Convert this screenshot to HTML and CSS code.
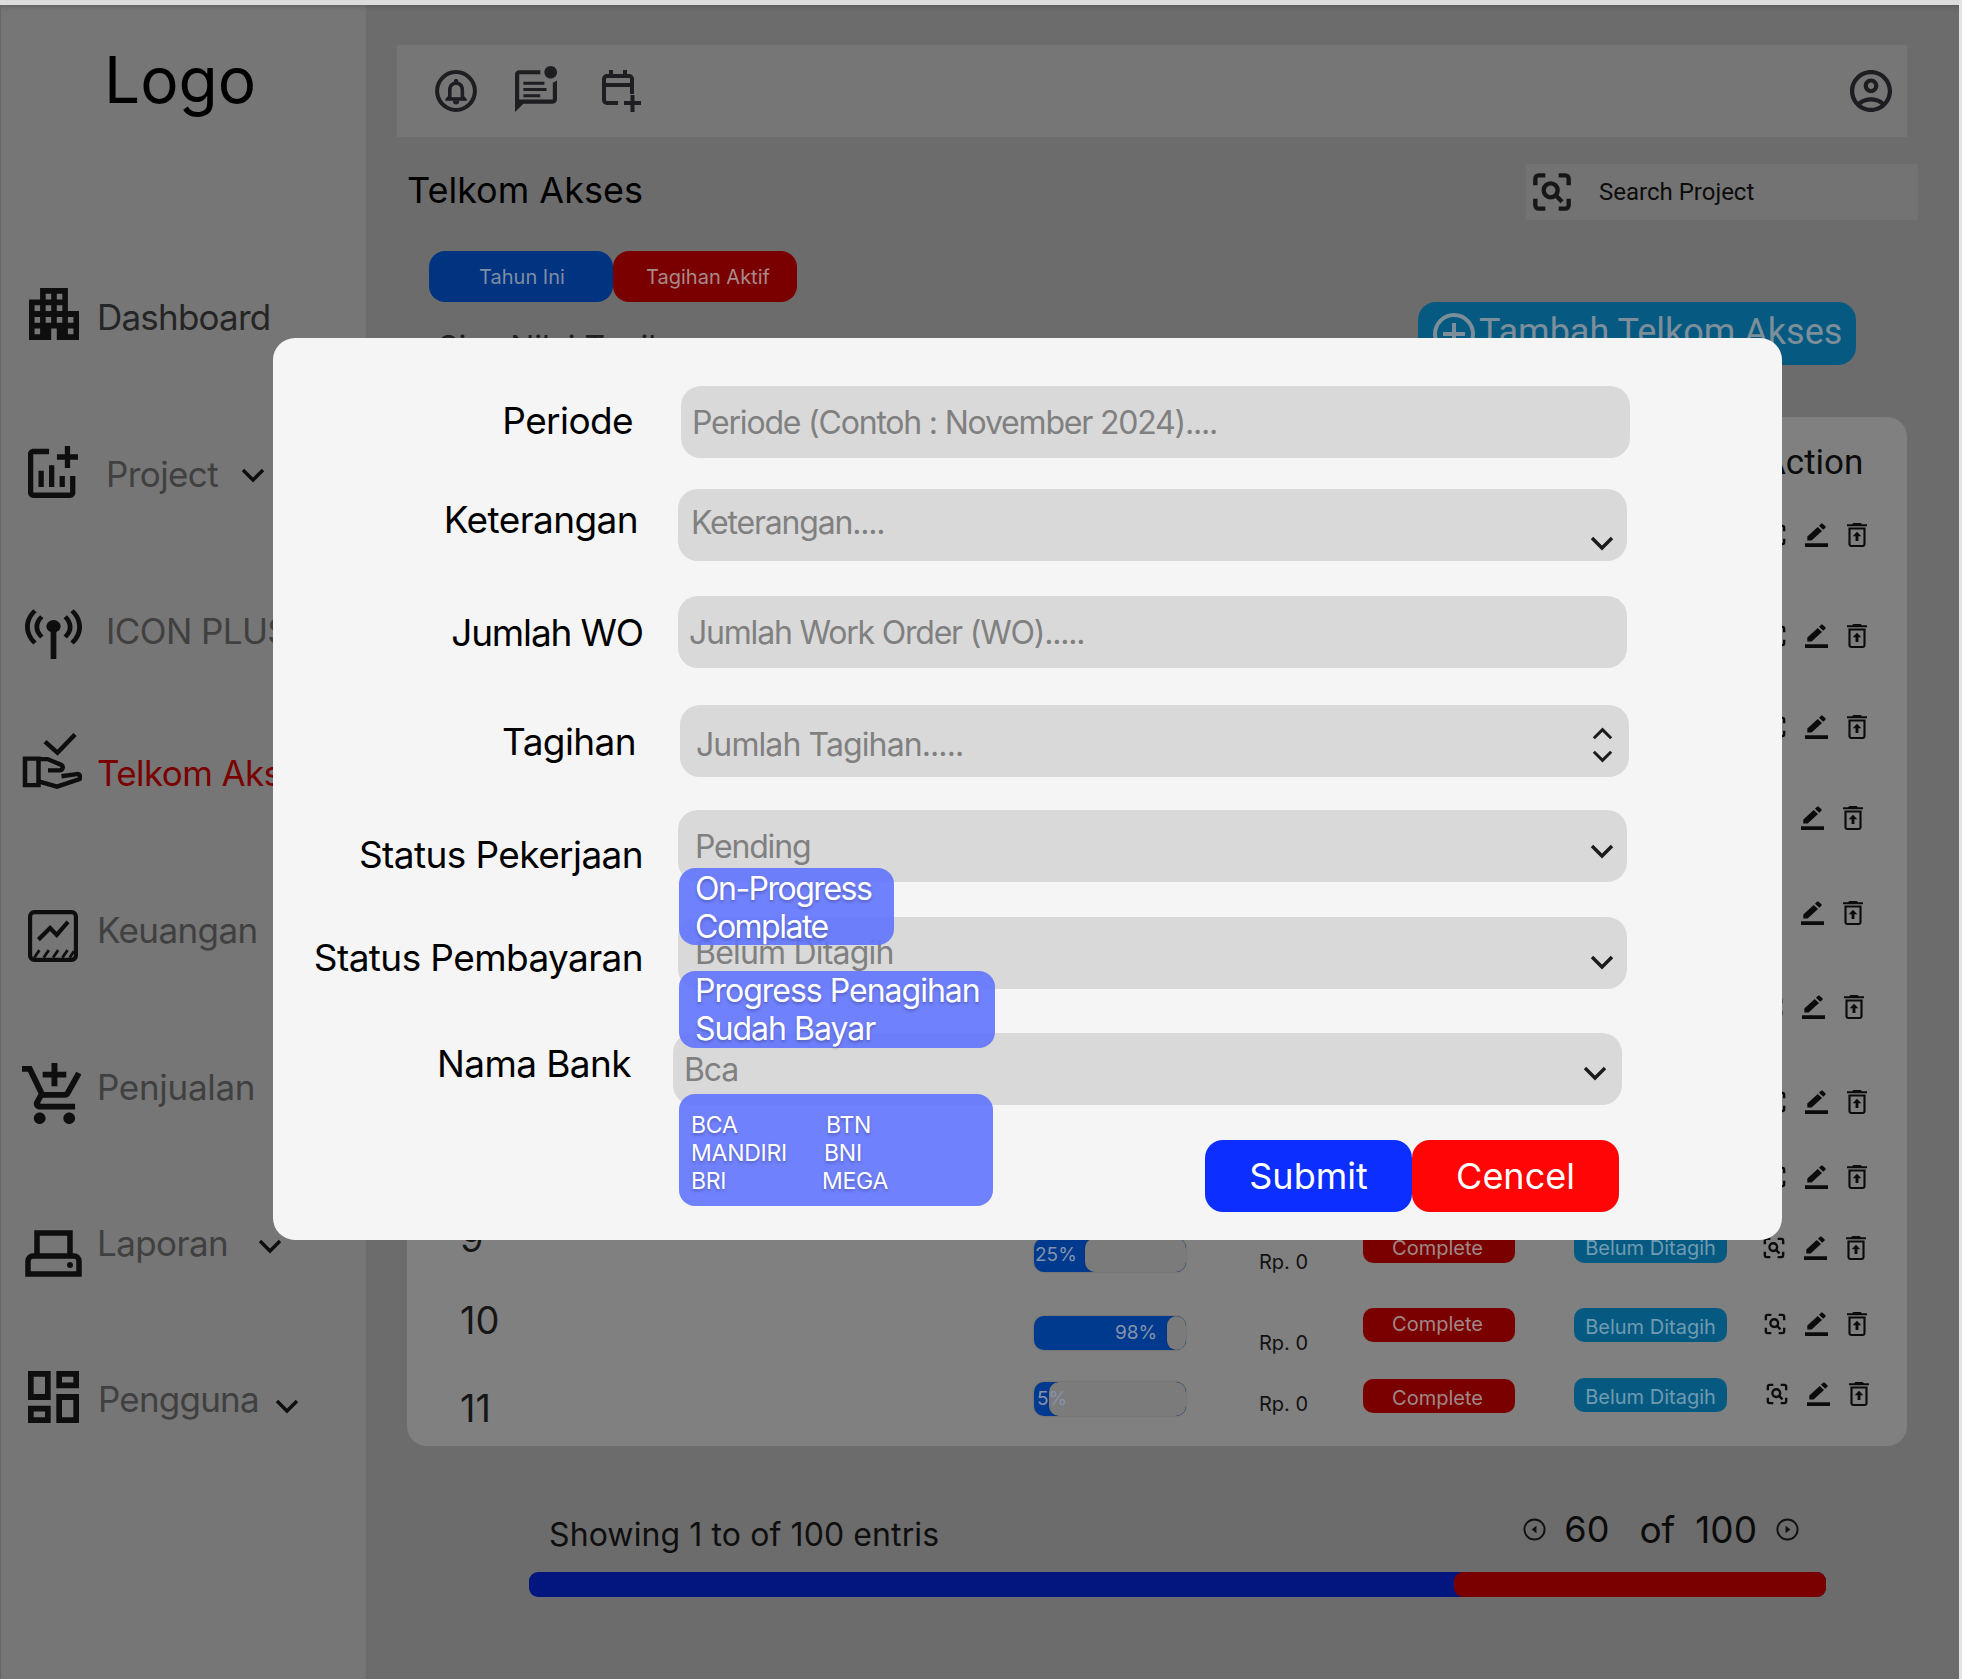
FILE: index.html
```html
<!DOCTYPE html>
<html lang="en">
<head>
    <meta charset="UTF-8">
    <meta name="viewport" content="width=device-width, initial-scale=1.0">
    <title>Telkom Akses</title>
    <link rel="stylesheet" href="styles.css">
</head>
<body>

    <svg class="sprite" width="0" height="0">
        <symbol id="i-chevron" viewBox="0 0 24 15"><path d="M2 2l10 10L22 2" fill="none" stroke="currentColor" stroke-width="3.4"/></symbol>
        <symbol id="i-scan" viewBox="0 0 24 24">
            <g fill="none" stroke="currentColor" stroke-width="2.6">
                <path d="M2 8V4a2 2 0 0 1 2-2h4M16 2h4a2 2 0 0 1 2 2v4M22 16v4a2 2 0 0 1-2 2h-4M8 22H4a2 2 0 0 1-2-2v-4"/>
                <circle cx="11.2" cy="11" r="4.2"/>
                <path d="M14.2 14l3.8 3.8"/>
            </g>
        </symbol>
        <symbol id="i-edit" viewBox="2 1.5 20 22.5" preserveAspectRatio="none"><path d="M22 24H2v-3.400h20V24zM13.060 5.190l3.750 3.750L7.750 18H4v-3.750l9.060-9.060zm4.820 2.680-3.750-3.750 1.830-1.830c.39-.39 1.020-.39 1.410 0l2.340 2.340c.39.39.39 1.020 0 1.410l-1.830 1.830z"/></symbol>
        <symbol id="i-trash" viewBox="5 3 14 18" preserveAspectRatio="none"><path fill-rule="evenodd" d="M15.500 4l-1-1h-5l-1 1H5v1.400h14V4zM6 6.400V19c0 1.100.9 2 2 2h8c1.100 0 2-.9 2-2V6.400H6zm1.500 1.500h9V19c0 .3-.2.500-.5.500H8c-.3 0-.5-.2-.5-.5V7.900zM12 9.500l-3 3.500h2v3.500h2V13h2z"/></symbol>
    </svg>

    <div class="top-strip"></div>

    <div class="page">

        <aside class="sidebar">
            <div class="logo">Logo</div>
            <nav class="nav">
                <a class="nav-item nav-dashboard">
                    <svg class="nav-icon" viewBox="3 3 18 18" preserveAspectRatio="none"><path d="M17 11V3H7v4H3v14h8v-4h2v4h8V11h-4zM7 19H5v-2h2v2zm0-4H5v-2h2v2zm0-4H5V9h2v2zm4 4H9v-2h2v2zm0-4H9V9h2v2zm0-4H9V5h2v2zm4 8h-2v-2h2v2zm0-4h-2V9h2v2zm0-4h-2V5h2v2zm4 12h-2v-2h2v2zm0-4h-2v-2h2v2z"/></svg>
                    <span class="nav-label">Dashboard</span>
                </a>
                <a class="nav-item nav-project">
                    <svg class="nav-icon" viewBox="3 2 19 19" preserveAspectRatio="none"><path d="M22 5v2h-3v3h-2V7h-3V5h3V2h2v3h3zm-3 14H5V5h6V3H5c-1.100 0-2 .9-2 2v14c0 1.100.9 2 2 2h14c1.100 0 2-.9 2-2v-6h-2v6zm-4-6v4h2v-4h-2zm-4 4h2V9h-2v8zm-2 0v-6H7v6h2z"/></svg>
                    <span class="nav-label">Project</span>
                    <svg class="chevron"><use href="#i-chevron"/></svg>
                </a>
                <a class="nav-item nav-icon-plus">
                    <svg class="nav-icon" viewBox="2 2 20 21" preserveAspectRatio="none"><path d="M7.300 14.700l1.200-1.200c-1-1-1.500-2.300-1.500-3.500 0-1.300.5-2.600 1.500-3.500L7.300 5.300c-1.300 1.300-2 3-2 4.700s.7 3.400 2 4.700zM19.100 2.900l-1.200 1.200c1.600 1.600 2.400 3.800 2.400 5.900 0 2.100-.8 4.300-2.400 5.900l1.200 1.200c2-2 2.900-4.500 2.900-7.100 0-2.600-1-5.100-2.900-7.100zM6.100 4.100 4.900 2.900C3 4.900 2 7.400 2 10s1 5.100 2.900 7.100l1.200-1.200C4.500 14.300 3.700 12.100 3.700 10c0-2.100.8-4.300 2.400-5.900zM16.700 14.700c1.300-1.300 2-3 2-4.700-.1-1.700-.7-3.400-2-4.700l-1.200 1.200c1 1 1.500 2.300 1.500 3.500 0 1.300-.5 2.600-1.500 3.500l1.200 1.200z"/><circle cx="12" cy="9.800" r="2.500"/><rect x="11" y="11" width="2" height="12"/></svg>
                    <span class="nav-label">ICON PLUS</span>
                </a>
                <a class="nav-item nav-telkom active">
                    <svg class="nav-icon" viewBox="0 0 24 24" preserveAspectRatio="none">
                        <g fill="none" stroke="currentColor" stroke-width="1.800">
                            <path d="M9.200 4l5 4.600L21.200 1"/>
                            <path d="M1.200 11h5.400v11H1.200z"/>
                            <path d="M6.600 11.200h3.600l5.400 2.300c1.200.6.7 2.400-.6 2.400h-4.600M6.600 20.400l7.400 2.200 8.800-3c1-.6.4-2.400-1-2.200l-6 .9"/>
                        </g>
                    </svg>
                    <span class="nav-label">Telkom Akses</span>
                </a>
                <a class="nav-item nav-keuangan">
                    <svg class="nav-icon" viewBox="0 0 24 24" preserveAspectRatio="none">
                        <g fill="none" stroke="currentColor">
                            <rect x="1" y="1" width="22" height="22" rx="2" stroke-width="2"/>
                            <path d="M5 13.700l5.600-5.400 3.200 3.200 5.400-6" stroke-width="2"/>
                            <path d="M3 22l2.500-3.500M7.500 22l2.500-3.500M12 22l2.500-3.500M16.500 22l2.500-3.500M20 22l2-3" stroke-width="1.300"/>
                        </g>
                    </svg>
                    <span class="nav-label">Keuangan</span>
                </a>
                <a class="nav-item nav-penjualan">
                    <svg class="nav-icon" viewBox="1 1 20 21" preserveAspectRatio="none"><path d="M11 9h2V6h3V4h-3V1h-2v3H8v2h3v3zm-4 9c-1.100 0-1.990.9-1.990 2S5.900 22 7 22s2-.9 2-2-.9-2-2-2zm10 0c-1.100 0-1.990.9-1.990 2s.89 2 1.990 2 2-.9 2-2-.9-2-2-2zm-9.830-3.250l.03-.12.9-1.630h7.450c.75 0 1.410-.41 1.750-1.030l3.860-7.010L19.420 4h-.01l-1.100 2-2.760 5H8.530l-.13-.27L6.160 6l-.95-2-.94-2H1v2h2l3.600 7.590-1.350 2.450c-.16.28-.25.61-.25.96 0 1.100.9 2 2 2h12v-2H7.420c-.13 0-.25-.11-.25-.25z"/></svg>
                    <span class="nav-label">Penjualan</span>
                </a>
                <a class="nav-item nav-laporan">
                    <svg class="nav-icon" viewBox="0 0 57 47" preserveAspectRatio="none">
                        <g fill="none" stroke="currentColor" stroke-width="5.500">
                            <path d="M12 26V3h33v23"/>
                            <path d="M3 44V31a5 5 0 0 1 5-5h41a5 5 0 0 1 5 5v13z"/>
                        </g>
                        <circle cx="45" cy="35" r="3"/>
                    </svg>
                    <span class="nav-label">Laporan</span>
                    <svg class="chevron"><use href="#i-chevron"/></svg>
                </a>
                <a class="nav-item nav-pengguna">
                    <svg class="nav-icon" viewBox="3 3 18 18" preserveAspectRatio="none"><path d="M19 5v2h-4V5h4M9 5v6H5V5h4m10 8v6h-4v-6h4M9 17v2H5v-2h4M21 3h-8v6h8V3zM11 3H3v10h8V3zm10 8h-8v10h8V11zm-10 4H3v6h8v-6z"/></svg>
                    <span class="nav-label">Pengguna</span>
                    <svg class="chevron"><use href="#i-chevron"/></svg>
                </a>
            </nav>
        </aside>

        <main class="content">
            <header class="topbar">
                <svg class="top-icon icon-bell" viewBox="0 0 24 24">
                    <circle cx="12" cy="12" r="10.800" fill="none" stroke="currentColor" stroke-width="2.300"/>
                    <path transform="translate(3.400 3.600) scale(.72)" stroke="currentColor" stroke-width=".8" d="M12 22c1.100 0 2-.9 2-2h-4c0 1.100.9 2 2 2zm6-6v-5c0-3.070-1.630-5.640-4.500-6.320V4c0-.83-.67-1.500-1.500-1.500s-1.500.67-1.500 1.500v.68C7.640 5.360 6 7.920 6 11v5l-2 2v1h16v-1l-2-2zm-2 1H8v-6c0-2.480 1.510-4.500 4-4.500s4 2.020 4 4.500v6z"/>
                </svg>
                <svg class="top-icon icon-chat" viewBox="2 0 20 22" preserveAspectRatio="none"><path d="M22 6.980V16c0 1.100-.9 2-2 2H6l-4 4V4c0-1.100.9-2 2-2h10.100c-.06.32-.1.66-.1 1s.04.68.1 1H4v12h16V7.900c.74-.15 1.420-.48 2-.92zM16 3c0 1.660 1.340 3 3 3s3-1.340 3-3-1.340-3-3-3-3 1.340-3 3zM6 9h10V7.500H6V9zm0 3h11v-1.500H6V12zm0 3h8v-1.500H6V15z"/></svg>
                <svg class="top-icon icon-calendar" viewBox="0 0 41 42">
                    <g fill="none" stroke="currentColor" stroke-width="4">
                        <path d="M32 24V9a3 3 0 0 0-3-3H7a3 3 0 0 0-3 3v21a3 3 0 0 0 3 3h11M4 15h28M11 0v6M25 0v6"/>
                        <path d="M24 33h17M32.500 25v17"/>
                    </g>
                </svg>
                <svg class="top-icon icon-user" viewBox="2 2 20 20"><path d="M12 2C6.480 2 2 6.480 2 12s4.480 10 10 10 10-4.480 10-10S17.520 2 12 2zM7.350 18.500C8.660 17.560 10.260 17 12 17s3.340.56 4.650 1.500C15.340 19.440 13.740 20 12 20s-3.340-.56-4.650-1.500zm10.790-1.380C16.450 15.800 14.320 15 12 15s-4.450.8-6.140 2.120C4.700 15.730 4 13.950 4 12c0-4.420 3.580-8 8-8s8 3.580 8 8c0 1.950-.7 3.730-1.860 5.120zM12 6c-1.930 0-3.500 1.570-3.500 3.500S10.070 13 12 13s3.500-1.570 3.500-3.500S13.930 6 12 6zm0 5c-.83 0-1.500-.67-1.500-1.500S11.170 8 12 8s1.500.67 1.500 1.500S12.830 11 12 11z"/></svg>
            </header>

            <div class="title-row">
                <h1 class="page-title">Telkom Akses</h1>
                <div class="search">
                    <svg class="search-icon"><use href="#i-scan"/></svg>
                    <span>Search Project</span>
                </div>
            </div>

            <div class="filters">
                <button class="filter filter-blue">Tahun Ini</button>
                <button class="filter filter-red">Tagihan Aktif</button>
            </div>

            <div class="sub-row">
                <span class="sub-title">Sisa Nilai Tagihan</span>
                <button class="add-btn">
                    <svg class="add-icon" viewBox="0 0 42 42"><circle cx="21" cy="21" r="19" fill="none" stroke="currentColor" stroke-width="4"/><path d="M21 10v22M10 21h22" stroke="currentColor" stroke-width="4"/></svg>
                    Tambah Telkom Akses
                </button>
            </div>

            <section class="table-card">
                <div class="row row-head"><span class="head-action">Action</span></div>

                <div class="row row-1"><div class="actions"><svg class="a-scan"><use href="#i-scan"/></svg><svg class="a-edit"><use href="#i-edit"/></svg><svg class="a-trash"><use href="#i-trash"/></svg></div></div>
                <div class="row row-2"><div class="actions"><svg class="a-scan"><use href="#i-scan"/></svg><svg class="a-edit"><use href="#i-edit"/></svg><svg class="a-trash"><use href="#i-trash"/></svg></div></div>
                <div class="row row-3"><div class="actions"><svg class="a-scan"><use href="#i-scan"/></svg><svg class="a-edit"><use href="#i-edit"/></svg><svg class="a-trash"><use href="#i-trash"/></svg></div></div>
                <div class="row row-4"><div class="actions"><svg class="a-scan"><use href="#i-scan"/></svg><svg class="a-edit"><use href="#i-edit"/></svg><svg class="a-trash"><use href="#i-trash"/></svg></div></div>
                <div class="row row-5"><div class="actions"><svg class="a-scan"><use href="#i-scan"/></svg><svg class="a-edit"><use href="#i-edit"/></svg><svg class="a-trash"><use href="#i-trash"/></svg></div></div>
                <div class="row row-6"><div class="actions"><svg class="a-scan"><use href="#i-scan"/></svg><svg class="a-edit"><use href="#i-edit"/></svg><svg class="a-trash"><use href="#i-trash"/></svg></div></div>
                <div class="row row-7"><div class="actions"><svg class="a-scan"><use href="#i-scan"/></svg><svg class="a-edit"><use href="#i-edit"/></svg><svg class="a-trash"><use href="#i-trash"/></svg></div></div>
                <div class="row row-8"><div class="actions"><svg class="a-scan"><use href="#i-scan"/></svg><svg class="a-edit"><use href="#i-edit"/></svg><svg class="a-trash"><use href="#i-trash"/></svg></div></div>

                <div class="row row-9">
                    <span class="num">9</span>
                    <div class="bar"><span class="pct pct-25">25%</span><i class="bar-rest" style="width:101px"></i></div>
                    <span class="rp">Rp. 0</span>
                    <span class="badge badge-red">Complete</span>
                    <span class="badge badge-blue">Belum Ditagih</span>
                    <div class="actions"><svg class="a-scan"><use href="#i-scan"/></svg><svg class="a-edit"><use href="#i-edit"/></svg><svg class="a-trash"><use href="#i-trash"/></svg></div>
                </div>
                <div class="row row-10">
                    <span class="num">10</span>
                    <div class="bar"><span class="pct pct-98">98%</span><i class="bar-rest" style="width:19px"></i></div>
                    <span class="rp">Rp. 0</span>
                    <span class="badge badge-red">Complete</span>
                    <span class="badge badge-blue">Belum Ditagih</span>
                    <div class="actions"><svg class="a-scan"><use href="#i-scan"/></svg><svg class="a-edit"><use href="#i-edit"/></svg><svg class="a-trash"><use href="#i-trash"/></svg></div>
                </div>
                <div class="row row-11">
                    <span class="num">11</span>
                    <div class="bar"><span class="pct pct-5">5%</span><i class="bar-rest" style="width:137px"></i></div>
                    <span class="rp">Rp. 0</span>
                    <span class="badge badge-red">Complete</span>
                    <span class="badge badge-blue">Belum Ditagih</span>
                    <div class="actions"><svg class="a-scan"><use href="#i-scan"/></svg><svg class="a-edit"><use href="#i-edit"/></svg><svg class="a-trash"><use href="#i-trash"/></svg></div>
                </div>
            </section>

            <div class="pager-row">
                <span class="showing">Showing 1 to of 100 entris</span>
                <div class="pager">
                    <svg class="pager-icon" viewBox="0 0 24 24"><circle cx="12" cy="12" r="10.500" fill="none" stroke="currentColor" stroke-width="2"/><path d="M14 8v8l-5-4z"/></svg>
                    <span class="pager-cur">60</span>
                    <span class="pager-of">of</span>
                    <span class="pager-total">100</span>
                    <svg class="pager-icon" viewBox="0 0 24 24"><circle cx="12" cy="12" r="10.500" fill="none" stroke="currentColor" stroke-width="2"/><path d="M10 8v8l5-4z"/></svg>
                </div>
            </div>
            <div class="page-bar"><div class="page-bar-rest"></div></div>
        </main>
    </div>

    <div class="edge-right"></div>

    <!-- Tambah modal -->
    <div class="overlay-dialog">
        <div class="form-row f-periode">
            <label class="form-label">Periode</label>
            <div class="field">Periode (Contoh : November 2024)....</div>
        </div>
        <div class="form-row f-keterangan">
            <label class="form-label">Keterangan</label>
            <div class="field">Keterangan....<svg class="field-chevron"><use href="#i-chevron"/></svg></div>
        </div>
        <div class="form-row f-jumlah">
            <label class="form-label">Jumlah WO</label>
            <div class="field">Jumlah Work Order (WO).....</div>
        </div>
        <div class="form-row f-tagihan">
            <label class="form-label">Tagihan</label>
            <div class="field">Jumlah Tagihan.....
                <span class="spinner">
                    <svg class="spin-up"><use href="#i-chevron"/></svg>
                    <svg class="spin-down"><use href="#i-chevron"/></svg>
                </span>
            </div>
        </div>
        <div class="form-row f-pekerjaan">
            <label class="form-label">Status Pekerjaan</label>
            <div class="field">Pending<svg class="field-chevron"><use href="#i-chevron"/></svg>
                <div class="menu menu-a"><div>On-Progress</div><div>Complate</div></div>
            </div>
        </div>
        <div class="form-row f-pembayaran">
            <label class="form-label">Status Pembayaran</label>
            <div class="field">Belum Ditagih<svg class="field-chevron"><use href="#i-chevron"/></svg>
                <div class="menu menu-b"><div>Progress Penagihan</div><div>Sudah Bayar</div></div>
            </div>
        </div>
        <div class="form-row f-bank">
            <label class="form-label">Nama Bank</label>
            <div class="field">Bca<svg class="field-chevron"><use href="#i-chevron"/></svg>
                <div class="menu menu-bank">
                    <span>BCA</span><span class="b1">BTN</span>
                    <span>MANDIRI</span><span class="b2">BNI</span>
                    <span>BRI</span><span class="b3">MEGA</span>
                </div>
            </div>
        </div>
        <div class="dialog-actions">
            <button class="dialog-btn btn-submit">Submit</button>
            <button class="dialog-btn btn-cancel">Cencel</button>
        </div>
    </div>

</body>
</html>
```

FILE: styles.css
```css
html, body {
    margin: 0;
    padding: 0;
}

body {
    position: relative;
    width: 1962px;
    height: 1679px;
    overflow: hidden;
    font-family: 'Inter', 'Liberation Sans', sans-serif;
    background-color: #6c6c6c;
    color: #000;
}

.sprite {
    position: absolute;
}

.top-strip {
    height: 5px;
    background: #dcdcdc;
}

.edge-right {
    position: absolute;
    top: 0;
    right: 0;
    width: 3px;
    height: 100%;
    background: #e4e4e4;
}

.page {
    display: flex;
    height: 1674px;
}

/* sidebar */
.sidebar {
    width: 366px;
    flex: none;
    background: #767676;
    border-left: 1px solid #666;
    box-sizing: border-box;
    box-shadow: inset 0 6px 6px -6px #555;
}

.logo {
    font-size: 64px;
    line-height: 76px;
    padding: 37px 0 0 103px;
    height: 246px;
    box-sizing: content-box;
}

.nav {
    display: flex;
    flex-direction: column;
}

.nav-item {
    display: flex;
    align-items: flex-start;
    color: #0e0e0e;
}

.nav-icon {
    display: block;
    flex: none;
    fill: currentColor;
    width: var(--iw);
    height: var(--ih);
    margin: var(--it) 0 0 var(--ix);
}

.nav-label {
    font-size: 35px;
    letter-spacing: var(--ls, -0.6px);
    line-height: 44px;
    white-space: nowrap;
    color: #404040;
    margin: var(--lt) 0 0 var(--lx);
}

.active .nav-label {
    color: #7a0000;
}

.chevron {
    flex: none;
    width: 24px;
    height: 15px;
    margin: var(--ct) 0 0 var(--cx);
}

.nav-dashboard { height: 159px; --iw: 50px; --ih: 52px; --ix: 28px; --it: 0px; --lx: 18px; --lt: 7px; --ls: -0.8px; }
.nav-dashboard .nav-label { color: #252525; }
.nav-project { height: 160px; --iw: 50px; --ih: 52px; --ix: 27px; --it: -1px; --lx: 28px; --lt: 5px; --cx: 23px; --ct: 21px; }
.nav-icon-plus { height: 125px; --iw: 57px; --ih: 52px; --ix: 24px; --it: 0px; --lx: 24px; --lt: 2px; }
.nav-telkom { height: 178px; --iw: 60px; --ih: 58px; --ix: 21px; --it: 0px; --lx: 15px; --lt: 19px; }
.nav-keuangan { height: 153px; --iw: 50px; --ih: 52px; --ix: 27px; --it: 0px; --lx: 19px; --lt: -2px; }
.nav-penjualan { height: 167px; --iw: 59px; --ih: 61px; --ix: 21px; --it: 0px; --lx: 16px; --lt: 2px; --ls: -0.3px; }
.nav-laporan { height: 141px; --iw: 57px; --ih: 47px; --ix: 24px; --it: 0px; --lx: 15px; --lt: -9px; --cx: 30px; --ct: 9px; }
.nav-pengguna { height: 60px; --iw: 51px; --ih: 52px; --ix: 27px; --it: 0px; --lx: 19px; --lt: 6px; --ls: -0.8px; --cx: 16px; --ct: 28px; }

/* main */
.content {
    flex: 1;
    min-width: 0;
    padding: 40px 0 0 31px;
    box-shadow: inset 0 6px 6px -6px #555;
}

.topbar {
    display: flex;
    align-items: center;
    width: 1510px;
    height: 92px;
    background: #767676;
    color: #1d1d22;
}

.top-icon {
    display: block;
    flex: none;
    fill: currentColor;
}

.icon-bell { width: 42px; height: 42px; margin: 0 0 0 38px; }
.icon-chat { width: 42px; height: 46px; margin: -4px 0 0 38px; }
.icon-calendar { width: 41px; height: 42px; margin: 0 0 0 43px; }
.icon-user { width: 42px; height: 42px; margin: 0 15px 0 auto; }

.title-row {
    display: flex;
    justify-content: space-between;
    height: 114px;
    width: 1521px;
}

.page-title {
    font-size: 36px;
    line-height: 44px;
    font-weight: 400;
    margin: 31px 0 0 10px;
}

.search {
    display: flex;
    align-items: center;
    width: 392px;
    height: 56px;
    margin-top: 27px;
    background: #737373;
    font-family: 'Roboto', sans-serif;
    font-size: 24px;
    color: #0c0c0c;
}

.search-icon {
    width: 40px;
    height: 40px;
    margin: 0 27px 0 6px;
    color: #17171a;
}

.filters {
    display: flex;
    margin-left: 32px;
}

.filter {
    width: 184px;
    height: 51px;
    border: 0;
    border-radius: 16px;
    font-family: inherit;
    font-size: 20px;
}

.filter-blue { background: #003380; color: #7f8ca6; padding: 0 0 0 2px; }
.filter-red { background: #7a0000; color: #a88a8a; padding: 0 0 0 6px; }

.sub-row {
    display: flex;
    justify-content: space-between;
    width: 1459px;
    height: 115px;
}

.sub-title {
    font-size: 32px;
    line-height: 40px;
    margin: 26px 0 0 41px;
    color: #202020;
}

.add-btn {
    display: flex;
    align-items: flex-start;
    width: 438px;
    height: 63px;
    padding: 8px 0 0 15px;
    border: 0;
    border-radius: 18px;
    background: #065a82;
    color: #7c8e99;
    font-family: 'Roboto', sans-serif;
    font-size: 36px;
    line-height: 44px;
    white-space: nowrap;
}

.add-icon {
    width: 42px;
    height: 42px;
    margin: 3px 4px 0 0;
}

/* table */
.table-card {
    box-sizing: border-box;
    width: 1500px;
    height: 1029px;
    margin-left: 10px;
    padding-left: 53px;
    background: #808080;
    border-radius: 20px;
}

.row {
    display: grid;
    grid-template-columns: 574px 225px 104px 211px 190px auto;
    align-items: start;
    height: var(--h);
}

.row-head { --h: 106px; }

.head-action {
    grid-column: 6;
    font-family: 'Roboto', sans-serif;
    font-size: 35px;
    line-height: 40px;
    margin: 26px 0 0 -1px;
    color: #0c0c0c;
}

.row-1 { --h: 101px; }
.row-2 { --h: 91px; }
.row-3 { --h: 91px; }
.row-4 { --h: 95px; --ax: -4px; }
.row-5 { --h: 94px; --ax: -4px; }
.row-6 { --h: 95px; --ax: -3px; }
.row-7 { --h: 75px; }
.row-8 { --h: 71px; }
.row-9 { --h: 76px; --num: -20px; --bar: 2px; --rp: 14px; --red: -7px; --blue: -7px; --ax: -1px; --red-lh: 39px; --blue-lh: 39px; }
.row-10 { --h: 70px; --num: -14px; --bar: 4px; --rp: 19px; --red: -4px; --blue: -4px; --red-lh: 32px; --blue-lh: 38px; }
.row-11 { --h: 64px; --num: 4px; --bar: 0px; --rp: 10px; --red: -3px; --blue: -4px; --ax: 2px; --red-lh: 38px; --blue-lh: 38px; }

.num {
    font-size: 38px;
    line-height: 44px;
    color: #161616;
    margin-top: var(--num);
}

.bar {
    position: relative;
    width: 152px;
    height: 34px;
    margin-top: var(--bar);
    border-radius: 10px;
    background: #003a8f;
    overflow: hidden;
    box-shadow: 0 0 2px rgba(0, 0, 0, 0.25);
}

.bar-rest {
    position: absolute;
    top: 0;
    right: 0;
    height: 100%;
    border-radius: 10px;
    background: #7b7b7b;
    box-shadow: 0 0 2px rgba(0, 0, 0, 0.3);
}

.pct {
    position: relative;
    z-index: 1;
    display: block;
    font-size: 19px;
    line-height: 34px;
    color: #8593aa;
}

.pct-25 { padding-left: 1px; }
.pct-98 { padding-left: 81px; }
.pct-5 { padding-left: 3px; }

.rp {
    font-size: 20px;
    line-height: 24px;
    color: #111;
    margin-top: var(--rp);
}

.badge {
    width: 152px;
    height: 34px;
    border-radius: 10px;
    font-size: 20px;
    text-align: center;
    white-space: nowrap;
}

.badge-red {
    box-sizing: border-box;
    padding-right: 3px;
    background: #7a0000;
    color: #a08888;
    line-height: var(--red-lh);
    margin-top: var(--red);
}

.badge-blue {
    width: 153px;
    background: #065a82;
    color: #6f9bb0;
    line-height: var(--blue-lh);
    margin-top: var(--blue);
}

.actions {
    grid-column: 6;
    display: flex;
    gap: 19px;
    color: #0b0b0b;
    margin-left: var(--ax, 0px);
}

.actions svg {
    display: block;
    fill: currentColor;
    height: 24px;
}

.a-scan { width: 22px; }
.a-edit { width: 23px; }
.a-trash { width: 20px; }

.pager-row {
    display: flex;
    justify-content: space-between;
    width: 1402px;
    height: 126px;
}

.showing {
    font-size: 32px;
    line-height: 40px;
    letter-spacing: 0.1px;
    margin: 69px 0 0 152px;
    color: #0f0f0f;
}

.pager {
    display: flex;
    align-items: center;
    height: 40px;
    margin-top: 63px;
    font-size: 37px;
    color: #0b0b0b;
}

.pager-icon {
    width: 23px;
    height: 23px;
    fill: currentColor;
    color: #111;
}

.pager-cur { margin: 0 30px 0 18px; font-size: 36px; }
.pager-of { margin-right: 20px; }
.pager-total { margin-right: 19px; }

.page-bar {
    display: flex;
    justify-content: flex-end;
    width: 1297px;
    height: 25px;
    margin-left: 132px;
    border-radius: 9px;
    background: #03157f;
}

.page-bar-rest {
    width: 372px;
    border-radius: 9px;
    background: #7a0000;
}

/* modal */
.overlay-dialog {
    position: absolute;
    top: 338px;
    left: 273px;
    box-sizing: border-box;
    width: 1509px;
    height: 902px;
    padding-top: 48px;
    border-radius: 22px;
    background: #f5f5f5;
}

.form-row {
    display: flex;
    align-items: flex-start;
    height: 72px;
    margin-top: var(--mt);
}

.form-label {
    flex: none;
    width: var(--lw);
    margin-top: var(--ly);
    font-size: 37px;
    letter-spacing: var(--lbs, -0.6px);
    line-height: 40px;
    text-align: right;
    white-space: nowrap;
}

.field {
    position: relative;
    flex: none;
    box-sizing: border-box;
    width: 949px;
    height: 72px;
    margin-left: var(--gap);
    padding-left: var(--px);
    border-radius: 20px;
    background: #d9d9d9;
    color: #808080;
    font-size: 32px;
    letter-spacing: var(--fs, -1.2px);
    line-height: var(--flh);
    white-space: nowrap;
}

.f-periode { --mt: 0px; --lw: 360px; --gap: 48px; --ly: 15px; --px: 11px; --flh: 74px; }
.f-keterangan { --mt: 31px; --lw: 365px; --gap: 40px; --ly: 11px; --px: 13px; --flh: 67px; }
.f-jumlah { --mt: 35px; --lw: 370px; --gap: 35px; --ly: 17px; --px: 11px; --flh: 74px; --lbs: -1.15px; }
.f-tagihan { --mt: 37px; --lw: 363px; --gap: 44px; --ly: 17px; --px: 16px; --flh: 80px; --fs: -0.9px; }
.f-pekerjaan { --mt: 33px; --lw: 370px; --gap: 35px; --ly: 25px; --px: 17px; --flh: 74px; }
.f-pembayaran { --mt: 35px; --lw: 370px; --gap: 35px; --ly: 21px; --px: 17px; --flh: 72px; --fs: -0.8px; }
.f-bank { --mt: 44px; --lw: 358px; --gap: 42px; --ly: 11px; --px: 11px; --flh: 74px; }

.field-chevron {
    position: absolute;
    right: 13px;
    top: 34px;
    width: 24px;
    height: 15px;
    color: #1b1b1b;
}

.f-keterangan .field-chevron { top: 47px; }
.f-pembayaran .field-chevron { top: 38px; }
.f-bank .field-chevron { right: 15px; top: 33px; }

.spinner svg {
    position: absolute;
    right: 16px;
    width: 21px;
    height: 13px;
    color: #1b1b1b;
}

.spin-up { top: 22px; transform: scaleY(-1); }
.spin-down { top: 45px; }

/* dropdown panels over the form */
.menu {
    position: absolute;
    z-index: 2;
    box-sizing: border-box;
    border-radius: 16px;
    background: rgba(100, 118, 253, 0.92);
    color: #fff;
    font-size: 32px;
    letter-spacing: -1.5px;
    line-height: 38px;
    text-shadow: 0 2px 3px rgba(0, 0, 0, 0.25);
}

.menu-a {
    top: 58px;
    left: 1px;
    width: 215px;
    height: 77px;
    padding: 2px 0 0 16px;
}

.menu-b {
    top: 54px;
    left: 1px;
    width: 316px;
    height: 77px;
    padding: 1px 0 0 16px;
    letter-spacing: -1px;
}

.menu-bank {
    top: 61px;
    left: 6px;
    width: 314px;
    height: 112px;
    padding: 17px 0 0 12px;
    display: grid;
    grid-template-columns: 135px auto;
    justify-content: start;
    align-content: start;
    font-size: 23px;
    letter-spacing: -0.25px;
    line-height: 28px;
}

.b2 { margin-left: -2px; }
.b3 { margin-left: -4px; }

.dialog-actions {
    display: flex;
    margin: 35px 0 0 932px;
}

.dialog-btn {
    width: 207px;
    height: 72px;
    border: 0;
    border-radius: 18px;
    color: #fff;
    font-family: inherit;
    font-size: 36px;
    padding: 0;
}

.btn-submit { background: #0c2fff; }
.btn-cancel { background: #ff0505; }
```
